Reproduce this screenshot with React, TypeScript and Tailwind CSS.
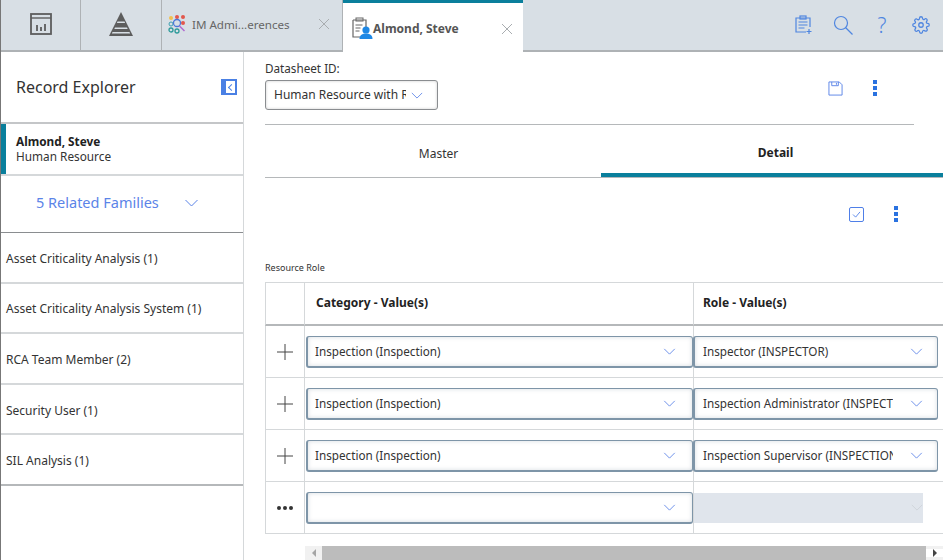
import React from "react";

const font = { fontFamily: '"Noto Sans", "Open Sans", sans-serif' };

function Chevron({ className = "" }: { className?: string }) {
  return (
    <svg viewBox="0 0 14 8" className={className} fill="none" stroke="currentColor" strokeWidth="1">
      <path d="M1 1l6 6 6-6" />
    </svg>
  );
}

function CloseX() {
  return (
    <svg viewBox="0 0 12 12" className="w-3 h-3 text-[#a9adb0]" fill="none" stroke="currentColor" strokeWidth="1">
      <path d="M1 1l10 10M11 1L1 11" />
    </svg>
  );
}

function Kebab() {
  return (
    <div className="flex flex-col gap-[2px]">
      <span className="w-1 h-1 bg-[#2a72e0]" />
      <span className="w-1 h-1 bg-[#2a72e0]" />
      <span className="w-1 h-1 bg-[#2a72e0]" />
    </div>
  );
}

function Select({ value, clip }: { value: string; clip?: boolean }) {
  return (
    <div className={`flex items-center h-[32px] flex-1 min-w-0 bg-white rounded-[3px] border border-[#7e95a8] border-l-2 border-b-2 shadow-[inset_0_0_4px_rgba(90,110,130,0.25)] ${clip ? "pl-2 pr-[14px]" : "pl-[7px] pr-[16px]"}`}>
      <span className={`text-[11.7px] text-[#333] whitespace-nowrap overflow-hidden mt-[1px] ${clip ? "w-[190px]" : "flex-1"}`}>{value}</span>
      <Chevron className="w-[13px] h-[7px] text-[#5b84e8] ml-auto shrink-0" />
    </div>
  );
}

const families = [
  "Asset Criticality Analysis (1)",
  "Asset Criticality Analysis System (1)",
  "RCA Team Member (2)",
  "Security User (1)",
  "SIL Analysis (1)",
];

const rows = [
  { role: "Inspector (INSPECTOR)" },
  { role: "Inspection Administrator (INSPECTION_ADMIN)" },
  { role: "Inspection Supervisor (INSPECTION_SUPERVISOR)" },
];

export default function App() {
  return (
    <div style={font} className="w-[943px] h-[560px] overflow-hidden bg-white flex flex-col text-[#222]">
      {/* top tab bar */}
      <div className="h-[52px] shrink-0 flex bg-[#d8dfe5] border-l border-[#777]">
        <div className="w-[80px] flex items-center justify-center border-r border-b-2 border-[#aeb2b5]">
          <svg viewBox="0 0 22 22" className="w-[22px] h-[22px] text-[#5d5d5d] mb-[2px]" fill="none" stroke="currentColor">
            <rect x="1" y="1" width="20" height="20" strokeWidth="1.8" />
            <path d="M1 5h20" strokeWidth="1.4" />
            <path d="M7 18v-6M11 18v-4M15 18v-7" strokeWidth="1.8" />
          </svg>
        </div>
        <div className="w-[81px] flex items-center justify-center border-r border-b-2 border-[#aeb2b5]">
          <svg viewBox="0 0 24 24" className="w-[24px] h-[24px] text-[#5d5d5d] mb-[2px]" fill="currentColor">
            <path d="M12 0L24 24H0z" />
            <path d="M8.500 9.500h7l.6 1.500H7.900zM6 15.500h12l.7 1.500H5.300zM3.500 20h17l.6 1.500H2.900z" fill="#d8dfe5" />
          </svg>
        </div>
        <div className="w-[181px] flex items-center pl-[6px] pr-[12px] border-r border-b-2 border-[#aeb2b5]">
          <svg viewBox="0 0 18 20" className="w-[18px] h-[20px] shrink-0 mb-[2px]">
            <circle cx="3" cy="4" r="2" fill="#f2c14e" />
            <circle cx="9" cy="3" r="2" fill="#e2574c" />
            <circle cx="15" cy="3" r="2" fill="#e2574c" />
            <circle cx="15" cy="9" r="2" fill="#e2574c" />
            <circle cx="3" cy="10" r="2" fill="none" stroke="#3f9fb0" />
            <circle cx="3" cy="16" r="2" fill="none" stroke="#2d9a9a" strokeWidth="1.3" />
            <circle cx="9" cy="17" r="2" fill="none" stroke="#2d9a9a" strokeWidth="1.3" />
            <circle cx="9" cy="9" r="3.5" fill="none" stroke="#4a78d8" strokeWidth="1.3" />
            <path d="M11.5 12l5 5" stroke="#b06ad0" strokeWidth="1.5" />
          </svg>
          <span className="ml-[6px] text-[11.6px] text-[#666] whitespace-nowrap mb-[1px]">IM Admi...erences</span>
          <span className="ml-auto mb-[3px]"><CloseX /></span>
        </div>
        <div className="w-[180px] bg-white border-t-[3px] border-[#0a7f9c] flex items-center pl-[8px] pr-[10px]">
          <svg viewBox="0 0 22 24" className="w-[22px] h-[24px] shrink-0 mt-[2px]">
            <path d="M2 3h13v9M2 3v17h7" fill="none" stroke="#666" strokeWidth="1.2" />
            <rect x="5" y="1" width="7" height="3" fill="none" stroke="#666" />
            <path d="M4.500 8h7M4.500 11h5M4.500 14h4" stroke="#666" />
            <circle cx="15" cy="13" r="3.600" fill="#1e88e5" />
            <path d="M8.500 22c0-4 3-5.500 6.500-5.500s6.500 1.500 6.500 5.500z" fill="#1e88e5" />
          </svg>
          <span className="mt-[3px] text-[12px] font-bold text-[#555] whitespace-nowrap">Almond, Steve</span>
          <span className="ml-auto mt-[3px]"><CloseX /></span>
        </div>
        <div className="flex-1 flex items-center justify-end gap-[19px] pr-[12px] border-b-2 border-[#aeb2b5] text-[#4f86e0]">
          <svg viewBox="0 0 20 20" className="w-[20px] h-[20px]" fill="none" stroke="currentColor" strokeWidth="1.2">
            <path d="M12 17H2V3h14v9" />
            <rect x="6" y="1" width="6" height="3" />
            <path d="M4.500 7h9M4.500 10h9M4.500 13h6M15 14v5M12.500 16.500h5" />
          </svg>
          <svg viewBox="0 0 20 20" className="w-[20px] h-[20px]" fill="none" stroke="currentColor" strokeWidth="1.2">
            <circle cx="8" cy="8" r="6.500" />
            <path d="M12.500 12.500l7 7" />
          </svg>
          <span className="w-[20px] text-center text-[21px] font-light leading-none">?</span>
          <span className="w-[20px] flex justify-center">
            <svg viewBox="0 0 24 24" className="w-[18px] h-[18px]" fill="none" stroke="currentColor" strokeWidth="1.700">
              <circle cx="12" cy="12" r="3" />
              <path d="M19.400 15a1.650 1.650 0 0 0 .33 1.820l.06.06a2 2 0 1 1-2.830 2.830l-.06-.06a1.650 1.650 0 0 0-2.820 1.170V21a2 2 0 1 1-4 0v-.09a1.650 1.650 0 0 0-2.750-1.170l-.06.06a2 2 0 1 1-2.830-2.830l.06-.06a1.650 1.650 0 0 0-1.170-2.820H3a2 2 0 1 1 0-4h.09a1.650 1.650 0 0 0 1.170-2.750l-.06-.06a2 2 0 1 1 2.830-2.830l.06.06a1.650 1.650 0 0 0 1.820.33H9a1.650 1.650 0 0 0 1-1.510V3a2 2 0 1 1 4 0v.09a1.650 1.650 0 0 0 2.750 1.170l.06-.06a2 2 0 1 1 2.830 2.830l-.06.06a1.650 1.650 0 0 0 1.170 2.820H21a2 2 0 1 1 0 4h-.09a1.650 1.650 0 0 0-1.510 1z" />
            </svg>
          </span>
        </div>
      </div>

      <div className="flex flex-1 min-h-0">
        {/* record explorer */}
        <aside className="w-[244px] shrink-0 flex flex-col border-l border-r border-l-[#777] border-r-[#d5d8da]">
          <div className="h-[72px] shrink-0 flex items-center justify-between pl-[15px] pr-[6px] border-b-2 border-[#c4c6c8]">
            <span className="text-[16px] text-[#333]">Record Explorer</span>
            <div className="w-4 h-4 border-2 border-[#4a80e4] border-l-[5px] flex items-center justify-center">
              <span className="w-[5px] h-[5px] border-l border-b border-[#4a80e4] rotate-45 ml-[1px]" />
            </div>
          </div>
          <div className="h-[52px] shrink-0 flex border-b-2 border-[#d5d8da]">
            <div className="w-[5px] bg-[#0a7f9c]" />
            <div className="pl-[10px] pt-[10px] text-[11.8px] leading-[15px]">
              <div className="font-bold text-[#222]">Almond, Steve</div>
              <div className="text-[#333]">Human Resource</div>
            </div>
          </div>
          <div className="h-[57px] shrink-0 flex items-center pl-[35px] pb-[2px] border-b border-[#8a8d90] text-[#5b84e8]">
            <span className="text-[14.500px]">5 Related Families</span>
            <Chevron className="w-[15px] h-[8px] ml-[25px]" />
          </div>
          {families.map((f) => (
            <div key={f} className="h-[50.600px] shrink-0 flex items-center pl-[5px] pt-[3px] text-[12px] text-[#333] border-b-2 border-[#d5d8da] last:border-[#b5b8ba]">
              {f}
            </div>
          ))}
        </aside>

        {/* detail panel */}
        <main className="flex-1 min-w-0 flex flex-col pl-[21px]">
          <div className="h-[73px] shrink-0 mr-[29px] border-b border-[#b5b8ba] flex items-start justify-between pt-[8px]">
            <div>
              <div className="text-[11.7px] leading-[16px] text-[#333]">Datasheet ID:</div>
              <div className="mt-[4px] w-[173px] h-[30px] flex items-center rounded-[3px] border border-[#8a8d90] shadow-[inset_0_0_3px_rgba(0,0,0,0.2)] pl-2 pr-[14px]">
                <span className="text-[12px] text-[#333] w-[132px] overflow-hidden whitespace-nowrap">Human Resource with Role</span>
                <Chevron className="w-[12px] h-[7px] text-[#5b84e8] ml-auto" />
              </div>
            </div>
            <div className="flex items-center gap-[30px] mt-[20px] mr-[37px]">
              <svg viewBox="0 0 16 16" className="w-[15px] h-[15px] text-[#5b84e8]" fill="none" stroke="currentColor" strokeWidth="1">
                <path d="M1 1h11l3 3v11H1z" />
                <path d="M4 1v4h7V1M9 2v2" />
              </svg>
              <Kebab />
            </div>
          </div>

          <div className="h-[45px] mt-[8px] shrink-0 flex border-b border-[#b5b8ba] text-[12px]">
            <div className="w-[336px] flex items-center justify-center pl-[11px] pb-[3px] text-[#333]">Master</div>
            <div className="flex-1 flex items-center justify-center pl-[7px] font-bold text-[#222] border-b-[4px] border-[#0a7f9c]">Detail</div>
          </div>

          <div className="h-[84px] shrink-0 flex items-start justify-end gap-[30px] pt-[28px] pr-[45px]">
            <div className="w-[15px] h-[15px] mt-[1px] rounded-[2px] border border-[#4f7fe8] flex items-center justify-center">
              <svg viewBox="0 0 10 8" className="w-[9px] h-[7px] text-[#4f7fe8]" fill="none" stroke="currentColor" strokeWidth="1"><path d="M1 4l3 3 5-6" /></svg>
            </div>
            <Kebab />
          </div>

          <div className="h-[20px] shrink-0 flex items-start text-[9px] leading-[11px] text-[#333]">Resource Role</div>

          {/* grid */}
          <div className="grid grid-cols-[40px_389px_249px] grid-rows-[43px_repeat(4,52px)] border-t border-[#d5d8da] w-[678px]">
            <div className="border-r border-l border-b-2 border-[#d5d8da] border-b-[#b5b8ba]" />
            <div className="flex items-center pl-[11px] pb-[2px] text-[12px] font-bold text-[#222] border-r border-b-2 border-r-[#d5d8da] border-b-[#b5b8ba]">Category - Value(s)</div>
            <div className="flex items-center pl-[9px] pb-[2px] text-[12px] font-bold text-[#222] border-b-2 border-[#b5b8ba]">Role - Value(s)</div>
            {rows.map((r) => (
              <React.Fragment key={r.role}>
                <div className="flex items-center justify-center border-r border-l border-b border-[#d5d8da]">
                  <svg viewBox="0 0 16 16" className="w-4 h-4 text-[#444]" fill="none" stroke="currentColor" strokeWidth="1"><path d="M8 0v16M0 8h16" /></svg>
                </div>
                <div className="flex items-center pl-[1px] border-r border-b border-r-[#d5d8da] border-b-[#d5d8da]">
                  <Select value="Inspection (Inspection)" />
                </div>
                <div className="flex items-center -ml-[1px] pr-[5px] border-b border-[#d5d8da]">
                  <Select value={r.role} clip />
                </div>
              </React.Fragment>
            ))}
            <div className="flex items-center justify-center border-r border-l border-b border-[#d5d8da] gap-[2px]">
              <span className="w-1 h-1 rounded-full bg-[#333]" />
              <span className="w-1 h-1 rounded-full bg-[#333]" />
              <span className="w-1 h-1 rounded-full bg-[#333]" />
            </div>
            <div className="flex items-center pl-[1px] border-r border-b border-r-[#d5d8da] border-b-[#d5d8da]">
              <Select value="" />
            </div>
            <div className="flex items-center border-b border-[#d5d8da]">
              <div className="w-[229px] h-[30px] bg-[#e0e5ec] flex items-center justify-end">
                <Chevron className="w-[12px] h-[7px] text-[#cdd2d8]" />
              </div>
            </div>
          </div>

          {/* scrollbar */}
          <div className="ml-[40px] mt-[12px] h-[14px] shrink-0 flex items-center bg-[#f1f1f1]">
            <div className="w-[17px] flex justify-center">
              <span className="w-0 h-0 border-y-[4px] border-r-[4px] border-y-transparent border-r-[#a5a5a5]" />
            </div>
            <div className="flex-1 h-full bg-[#bcbcbc]" />
            <div className="w-[17px] flex justify-center bg-white">
              <span className="w-0 h-0 border-y-[4px] border-l-[4px] border-y-transparent border-l-[#444]" />
            </div>
          </div>
        </main>
      </div>
    </div>
  );
}
